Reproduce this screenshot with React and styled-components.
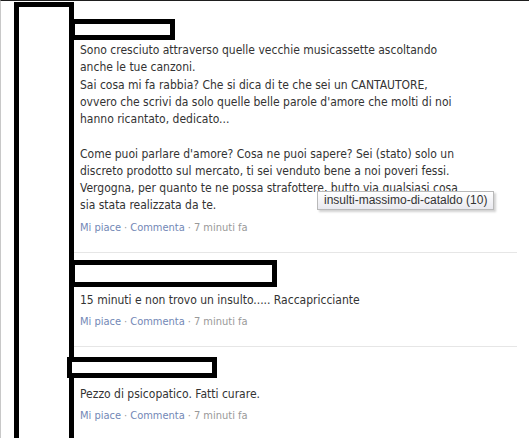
import React from 'react';
import styled, { createGlobalStyle } from 'styled-components';

const Global = createGlobalStyle`
  html, body { margin: 0; padding: 0; background: #fff; }
  body { width: 529px; height: 438px; overflow: hidden; }
`;

const Page = styled.div`
  position: relative;
  display: flex;
  align-items: flex-start;
  height: 438px;
  box-sizing: border-box;
  border-top: 1px solid #1e1e1e;
  border-left: 1px solid #c8c8c8;
  background: #fff;
  overflow: hidden;
  font-family: "DejaVu Sans Condensed", "DejaVu Sans", sans-serif;
  font-stretch: condensed;
`;

const Avatar = styled.div`
  flex: none;
  width: 60px;
  height: 460px;
  margin-left: 13px;
  margin-top: 1px;
  box-sizing: border-box;
  border: 5px solid #000;
  border-bottom: none;
`;

const Column = styled.div`
  flex: none;
  width: 443px;
  margin-top: 2px;
  display: flex;
  flex-direction: column;
`;

const Comment = styled.div`
  border-bottom: 1px solid #e6e6e6;
  padding-bottom: 17px;
`;

const Header = styled.div`
  height: 39px;
  display: flex;
  align-items: flex-start;
`;

const Redact = styled.div`
  flex: none;
  box-sizing: border-box;
  margin-top: ${p => p.$top}px;
  margin-left: ${p => p.$left}px;
  width: ${p => p.$w}px;
  height: ${p => p.$h}px;
  border: 5px solid #000;
  background: #fff;
`;

const Body = styled.div`
  padding-left: 6px;
  font-size: 12px;
  line-height: 17.25px;
  color: #333;
  white-space: nowrap;
`;

const Line = styled.div`
  min-height: 17.25px;
`;

const Meta = styled.div`
  padding-left: 6px;
  margin-top: 5px;
  font-size: 11px;
  line-height: 15px;
  color: #999;
  white-space: nowrap;
`;

const MetaLink = styled.span`
  color: #7388b6;
`;

const Dot = styled.span`
  margin: 0 3px;
`;

const Tooltip = styled.div`
  position: absolute;
  left: 316px;
  top: 190px;
  height: 19px;
  box-sizing: border-box;
  padding: 0 6px;
  font-family: "Liberation Sans", Arial, sans-serif;
  font-stretch: normal;
  font-size: 12px;
  line-height: 17px;
  color: #333;
  background: linear-gradient(#ffffff, #e9e9ef);
  border: 1px solid #b9b9b9;
  box-shadow: 2px 2px 2px rgba(0, 0, 0, 0.18);
  white-space: nowrap;
`;

const comments = [
  {
    redact: { top: 16, left: -4, w: 105, h: 21 },
    lines: [
      'Sono cresciuto attraverso quelle vecchie musicassette ascoltando',
      'anche le tue canzoni.',
      'Sai cosa mi fa rabbia? Che si dica di te che sei un CANTAUTORE,',
      "ovvero che scrivi da solo quelle belle parole d'amore che molti di noi",
      'hanno ricantato, dedicato...',
      '',
      "Come puoi parlare d'amore? Cosa ne puoi sapere? Sei (stato) solo un",
      'discreto prodotto sul mercato, ti sei venduto bene a noi poveri fessi.',
      'Vergogna, per quanto te ne possa strafottere, butto via qualsiasi cosa',
      'sia stata realizzata da te.',
    ],
  },
  {
    redact: { top: 7, left: -4, w: 207, h: 27 },
    lines: ['15 minuti e non trovo un insulto..... Raccapricciante'],
  },
  {
    redact: { top: 10, left: -7, w: 150, h: 21 },
    lines: ['Pezzo di psicopatico. Fatti curare.'],
  },
];

export default function App() {
  return (
    <>
      <Global />
      <Page>
        <Avatar />
        <Column>
          {comments.map((c, i) => (
            <Comment key={i}>
              <Header>
                <Redact $top={c.redact.top} $left={c.redact.left} $w={c.redact.w} $h={c.redact.h} />
              </Header>
              <Body>
                {c.lines.map((l, j) => (
                  <Line key={j}>{l}</Line>
                ))}
              </Body>
              <Meta>
                <MetaLink>Mi piace</MetaLink>
                <Dot>·</Dot>
                <MetaLink>Commenta</MetaLink>
                <Dot>·</Dot>
                7 minuti fa
              </Meta>
            </Comment>
          ))}
        </Column>
        <Tooltip>insulti-massimo-di-cataldo (10)</Tooltip>
      </Page>
    </>
  );
}
